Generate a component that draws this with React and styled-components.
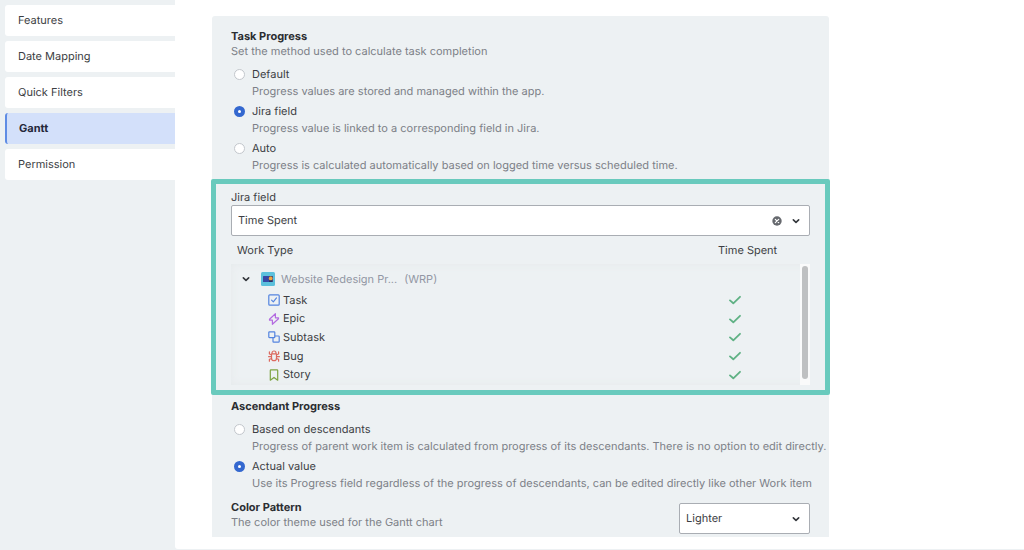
import React, { useState } from 'react'
import styled, { createGlobalStyle, css } from 'styled-components';

const GlobalStyle = createGlobalStyle`
    * {
        box-sizing: border-box;
    }

    body {
        margin: 0;
        background: #edf1f3;
        color: #3c3e43;
        font-family: Inter, "Liberation Sans", sans-serif;
        font-size: 11px;
        line-height: 15px;
        text-rendering: geometricPrecision;
    }

    button, select, input {
        margin: 0;
        font: inherit;
        color: inherit;
        text-rendering: inherit;
    }
`;

const Page = styled.div`
    display: grid;
    grid-template-columns: 175px 1fr;
    min-height: 100vh;
    padding-bottom: 1px;
`;

const Sidebar = styled.nav`
    display: flex;
    flex-direction: column;
    gap: 5px;
    padding: 5px 0 0 5px;
`;

const NavItem = styled.a`
    display: flex;
    align-items: center;
    height: 31px;
    padding-left: 13px;
    border-radius: 3px 0 0 3px;
    background: #fff;
    color: inherit;
    text-decoration: none;

    ${({ $active }) => $active && css`
        padding-left: 12px;
        border-left: 2px solid #5f8ce4;
        background: #d3e0fa;
        color: #25283a;
        font-weight: 700;
    `}
`;

const Main = styled.main`
    padding: 16px 195px 12px 37px;
    background: #fff;
    border-bottom-left-radius: 3px;
`;

const Panel = styled.div`
    padding: 13px 0 3px;
    border-radius: 3px 3px 0 0;
    background: #edf1f3;
`;

const Section = styled.section`
    padding-left: 19px;
`;

const Title = styled.h2`
    margin: 0;
    color: #2b2d31;
    font-size: 11px;
    font-weight: 700;
`;

const Description = styled.p`
    margin: 0;
    color: #7c8087;
`;

const Options = styled.div`
    display: grid;
    gap: 3px;
    margin-top: 7px;
    line-height: 17px;
`;

const Option = styled.div`
    display: grid;
    grid-template-columns: 11px 1fr;
    column-gap: 7px;
    align-items: center;
    padding-left: 3px;

    p {
        grid-column: 2;
    }
`;

const Radio = styled.input`
    appearance: none;
    width: 11px;
    height: 11px;
    border: 1px solid #c3c7cc;
    border-radius: 50%;
    background: #fff;

    &:checked {
        border: 4px solid #3468cf;
    }
`;

const Highlight = styled.section`
    margin: 5px -1px 4px;
    padding: 6px 15px 5px;
    border: 5px solid #69cabd;
    border-radius: 2px;
`;

const FieldLabel = styled.label`
    display: block;
`;

const SelectBox = styled.div`
    position: relative;
    width: ${({ $width }) => $width || '100%'};
`;

const Select = styled.select`
    appearance: none;
    display: block;
    width: 100%;
    height: 31px;
    padding: 0 30px 0 6px;
    border: 1px solid #a9adb3;
    border-radius: 2px;
    background: #fff;
`;

const SelectIcons = styled.div`
    position: absolute;
    top: 0;
    right: 10px;
    bottom: 0;
    display: flex;
    align-items: center;
    gap: 10px;
    pointer-events: none;
`;

const IconButton = styled.button`
    display: flex;
    padding: 0;
    border: 0;
    background: none;
    pointer-events: auto;
`;

const TableWrap = styled.div`
    position: relative;
`;

const Table = styled.table`
    display: block;

    thead, tbody {
        display: grid;
    }

    thead {
        grid-template-rows: 28px;
    }

    tbody {
        grid-template-rows: 27px repeat(5, 1fr);
        height: 121px;
        padding-bottom: 1px;
        box-shadow: inset 0 0 8px #e5e9eb;
    }

    tr {
        display: grid;
        grid-template-columns: 1fr 92px;
        align-items: center;
    }

    th, td {
        padding: 0;
        font-weight: 400;
        text-align: left;
    }

    thead th:first-child {
        padding-left: 6px;
    }
`;

const ProjectCell = styled.td`
    display: flex;
    align-items: center;
    padding-top: 3px !important;
    color: #9297a4;
`;

const ProjectToggle = styled(IconButton)`
    margin: 0 11px;
`;

const ProjectName = styled.span`
    margin: 0 7px 0 6px;
`;

const TypeCell = styled.td`
    display: flex;
    align-items: center;
    gap: 3px;
    padding-left: 37px !important;
`;

const CheckCell = styled.td`
    display: flex;
    padding-left: 11px !important;
`;

const ScrollTrack = styled.div`
    position: absolute;
    right: 0;
    bottom: 0;
    width: 10px;
    height: 121px;
    padding: 2px;
    background: #fafafa;
`;

const ScrollThumb = styled.div`
    height: 113px;
    border-radius: 3px;
    background: #bfc0c1;
`;

const PatternRow = styled.section`
    display: flex;
    justify-content: space-between;
    align-items: flex-end;
    height: 34px;
    margin-top: 8px;
    padding: 0 19px;
`;

const PatternText = styled.div`
    align-self: flex-start;
`;

const Stroke = ({ size = 12, color, width = 1.2, children }) => (
    <svg width={size} height={size} viewBox="0 0 12 12" fill="none" stroke={color} strokeWidth={width}
        strokeLinecap="round" strokeLinejoin="round" aria-hidden="true">
        {children}
    </svg>
);

const Chevron = ({ size = 8 }) => (
    <Stroke size={size} color="#34373c" width={2.4}><path d="M2 4.2 6 8l4-3.8" /></Stroke>
);

const ClearIcon = () => (
    <svg width="10" height="10" viewBox="0 0 10 10" aria-hidden="true">
        <circle cx="5" cy="5" r="4.7" fill="#66696e" />
        <path d="m3.3 3.3 3.4 3.4M6.7 3.3 3.3 6.7" stroke="#fff" strokeWidth="1.2" strokeLinecap="round" />
    </svg>
);

const CheckIcon = () => (
    <Stroke color="#5fb184" width={1.8}><path d="M1 6.4 4.3 9.3 11 2.8" /></Stroke>
);

const ProjectIcon = () => (
    <svg width="14" height="14" viewBox="0 0 14 14" aria-hidden="true">
        <rect width="14" height="14" rx="1.5" fill="#5cc0dc" />
        <rect x="2" y="4" width="10" height="6" rx=".5" fill="#3647a4" />
        <path d="M8 4h3.5v6H8z" fill="#5b4a55" />
        <circle cx="9.7" cy="6.4" r="1.9" fill="#f0a640" />
        <path d="M8 8.6h3V10H8z" fill="#263068" />
    </svg>
);

const icons = {
    Task: (
        <Stroke color="#5484df">
            <rect x=".8" y=".8" width="10.4" height="10.4" rx="1" />
            <path d="m3.6 6.2 1.7 1.7 3.2-4" />
        </Stroke>
    ),
    Epic: (
        <Stroke color="#b46be0">
            <path d="M7.4.7 1.5 6.3v.9h2.9v4.1l6.1-5.6v-.9H7.4z" />
        </Stroke>
    ),
    Subtask: (
        <Stroke color="#5484df">
            <rect x=".8" y=".8" width="6" height="5.8" rx=".7" />
            <path d="M6.8 5h3.7a.7.7 0 0 1 .7.7v4.8a.7.7 0 0 1-.7.7H5.7a.7.7 0 0 1-.7-.7V6.6" />
        </Stroke>
    ),
    Bug: (
        <Stroke color="#dc6a5f">
            <path d="M3.5 3.8h5v4.4a2.5 2.5 0 0 1-5 0zM4 3.6V3a2 2 0 0 1 4 0v.6" />
            <path d="M3.5 4.7 1.4 4V1.8M8.5 4.7l2.1-.7V1.8M.6 6.7h2.9M8.5 6.7h2.9M3.6 8.6l-2.2.7v1.9M8.4 8.6l2.2.7v1.9" />
        </Stroke>
    ),
    Story: (
        <Stroke color="#7ea443">
            <path d="M2.3 1.4a.6.6 0 0 1 .6-.6h6.2a.6.6 0 0 1 .6.6v9.8L6 8.4l-3.7 2.8z" />
        </Stroke>
    ),
};

const navItems = ['Features', 'Date Mapping', 'Quick Filters', 'Gantt', 'Permission'];

const taskOptions = [
    { value: 'default', label: 'Default', text: 'Progress values are stored and managed within the app.' },
    { value: 'jira', label: 'Jira field', text: 'Progress value is linked to a corresponding field in Jira.' },
    { value: 'auto', label: 'Auto', text: 'Progress is calculated automatically based on logged time versus scheduled time.' },
];

const ascendantOptions = [
    { value: 'descendants', label: 'Based on descendants', text: 'Progress of parent work item is calculated from progress of its descendants. There is no option to edit directly.' },
    { value: 'actual', label: 'Actual value', text: 'Use its Progress field regardless of the progress of descendants, can be edited directly like other Work item' },
];

const RadioOptions = ({ name, options, value, onChange }) => (
    <Options role="radiogroup">
        {options.map((option) => (
            <Option key={option.value}>
                <Radio type="radio" id={`${name}-${option.value}`} name={name}
                    checked={value === option.value} onChange={() => onChange(option.value)} />
                <label htmlFor={`${name}-${option.value}`}>{option.label}</label>
                <Description>{option.text}</Description>
            </Option>
        ))}
    </Options>
);

const App = () => {
    const [taskProgress, setTaskProgress] = useState('jira');
    const [ascendant, setAscendant] = useState('actual');
    const [field, setField] = useState('Time Spent');
    const [open, setOpen] = useState(true);

    return (
        <>
            <GlobalStyle />
            <Page>
                <Sidebar>
                    {navItems.map((item) => (
                        <NavItem key={item} href="#" $active={item === 'Gantt'}>{item}</NavItem>
                    ))}
                </Sidebar>
                <Main>
                    <Panel>
                        <Section>
                            <Title>Task Progress</Title>
                            <Description>Set the method used to calculate task completion</Description>
                            <RadioOptions name="task" options={taskOptions} value={taskProgress} onChange={setTaskProgress} />
                        </Section>

                        <Highlight>
                            <FieldLabel htmlFor="jira-field">Jira field</FieldLabel>
                            <SelectBox>
                                <Select id="jira-field" value={field} onChange={(e) => setField(e.target.value)}>
                                    <option value=""></option>
                                    <option value="Time Spent">Time Spent</option>
                                </Select>
                                <SelectIcons>
                                    <IconButton type="button" aria-label="Clear" onClick={() => setField('')}><ClearIcon /></IconButton>
                                    <Chevron />
                                </SelectIcons>
                            </SelectBox>
                            <TableWrap>
                                <Table>
                                    <thead>
                                        <tr>
                                            <th scope="col">Work Type</th>
                                            <th scope="col">Time Spent</th>
                                        </tr>
                                    </thead>
                                    <tbody>
                                        <tr>
                                            <ProjectCell>
                                                <ProjectToggle type="button" aria-label="Toggle project" onClick={() => setOpen(!open)}>
                                                    <Chevron />
                                                </ProjectToggle>
                                                <ProjectIcon />
                                                <ProjectName>Website Redesign Pr...</ProjectName>
                                                <span>(WRP)</span>
                                            </ProjectCell>
                                        </tr>
                                        {open && Object.keys(icons).map((type) => (
                                            <tr key={type}>
                                                <TypeCell>{icons[type]}{type}</TypeCell>
                                                <CheckCell><CheckIcon /></CheckCell>
                                            </tr>
                                        ))}
                                    </tbody>
                                </Table>
                                <ScrollTrack>
                                    <ScrollThumb />
                                </ScrollTrack>
                            </TableWrap>
                        </Highlight>

                        <Section>
                            <Title>Ascendant Progress</Title>
                            <RadioOptions name="ascendant" options={ascendantOptions} value={ascendant} onChange={setAscendant} />
                        </Section>

                        <PatternRow>
                            <PatternText>
                                <Title>Color Pattern</Title>
                                <Description>The color theme used for the Gantt chart</Description>
                            </PatternText>
                            <SelectBox $width="131px">
                                <Select aria-label="Color Pattern" defaultValue="Lighter">
                                    <option>Lighter</option>
                                    <option>Darker</option>
                                </Select>
                                <SelectIcons>
                                    <Chevron />
                                </SelectIcons>
                            </SelectBox>
                        </PatternRow>
                    </Panel>
                </Main>
            </Page>
        </>
    )
}

export default App
